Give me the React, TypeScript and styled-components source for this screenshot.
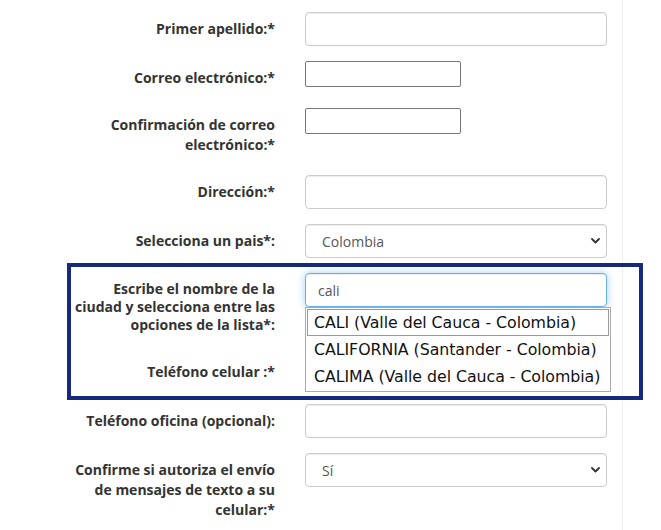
import React from "react";
import styled, { createGlobalStyle } from "styled-components";

const Global = createGlobalStyle`
  html, body { margin: 0; padding: 0; background: #fff; }
  body { font-family: "Open Sans", "Liberation Sans", sans-serif; font-size: 14px; line-height: 1.428571; color: #333; }
  * { box-sizing: border-box; }
`;

const Page = styled.div`
  width: 623px;
  min-height: 530px;
  border-right: 1px solid #eeeeee;
  padding: 12px 0 0 56px;
`;

const Row = styled.div`
  display: grid;
  grid-template-columns: 234px 1fr;
  margin-bottom: 15px;
`;

const Label = styled.label<{ $lh?: number; $mb?: number }>`
  display: block;
  padding: 7px 15px 0 15px;
  margin-bottom: ${(p) => p.$mb ?? 5}px;
  text-align: right;
  font-weight: 700;
  font-size: 14px;
  line-height: ${(p) => p.$lh ?? 20}px;
  color: #333;
`;

const Field = styled.div`
  position: relative;
  padding: 0 15px;
`;

const TextInput = styled.input<{ $focus?: boolean }>`
  display: block;
  width: 100%;
  height: 34px;
  padding: 6px 12px;
  font-family: "Open Sans", "Liberation Sans", sans-serif;
  font-size: 14px;
  color: #555;
  background: #fff;
  border: 1px solid ${(p) => (p.$focus ? "#66afe9" : "#ccc")};
  border-radius: 4px;
  box-shadow: inset 0 1px 1px rgba(0, 0, 0, 0.075)
    ${(p) => (p.$focus ? ", 0 0 8px rgba(102, 175, 233, 0.6)" : "")};
  outline: none;
`;

const PlainInput = styled.input`
  display: block;
  width: 156px;
  height: 26px;
  padding: 1px 2px;
  border: 1px solid #767676;
  border-radius: 2px;
  background: #fff;
  font-size: 13px;
  outline: none;
`;

const SelectWrap = styled.div`
  position: relative;
`;

const Select = styled.select`
  display: block;
  width: 100%;
  height: 34px;
  padding: 6px 30px 6px 16px;
  font-family: "Open Sans", "Liberation Sans", sans-serif;
  font-size: 14px;
  color: #555;
  background: #fff;
  border: 1px solid #ccc;
  border-radius: 4px;
  box-shadow: inset 0 1px 1px rgba(0, 0, 0, 0.075);
  appearance: none;
  -webkit-appearance: none;
  outline: none;
`;

const Chevron = styled.svg`
  position: absolute;
  right: 7px;
  top: 50%;
  margin-top: -3px;
  width: 9px;
  height: 6px;
  pointer-events: none;
`;

const Group = styled.div`
  position: relative;
`;

const Highlight = styled.div`
  position: absolute;
  top: -10px;
  left: 11px;
  width: 576px;
  height: 137px;
  border: 4px solid #17297f;
  pointer-events: none;
  z-index: 3;
`;

const Suggestions = styled.ul`
  position: absolute;
  top: 34px;
  left: 15px;
  width: 306px;
  margin: 0;
  padding: 1px;
  list-style: none;
  background: #fff;
  border: 1px solid #aaa;
  z-index: 2;
`;

const Suggestion = styled.li<{ $active?: boolean }>`
  height: 27px;
  padding: 0 6px;
  line-height: 25px;
  font-family: "DejaVu Sans", Verdana, sans-serif;
  font-size: 15.8px;
  letter-spacing: -0.05px;
  color: #111;
  white-space: nowrap;
  border: 1px solid ${(p) => (p.$active ? "#999" : "transparent")};
`;

const Down = () => (
  <Chevron viewBox="0 0 9 6">
    <path d="M1 1 L4.5 4.5 L8 1" fill="none" stroke="#333" strokeWidth="1.8" strokeLinecap="round" strokeLinejoin="round" />
  </Chevron>
);

export default function App() {
  return (
    <>
      <Global />
      <Page>
        <Row>
          <Label>Primer apellido:*</Label>
          <Field>
            <TextInput type="text" />
          </Field>
        </Row>
        <Row>
          <Label>Correo electrónico:*</Label>
          <Field>
            <PlainInput type="text" />
          </Field>
        </Row>
        <Row>
          <Label>Confirmación de correo electrónico:*</Label>
          <Field>
            <PlainInput type="text" />
          </Field>
        </Row>
        <Row>
          <Label>Dirección:*</Label>
          <Field>
            <TextInput type="text" />
          </Field>
        </Row>
        <Row>
          <Label>Selecciona un pais*:</Label>
          <Field>
            <SelectWrap>
              <Select defaultValue="co">
                <option value="co">Colombia</option>
              </Select>
              <Down />
            </SelectWrap>
          </Field>
        </Row>
        <Group>
          <Highlight />
          <Row>
            <Label $lh={18} $mb={6}>
              Escribe el nombre de la ciudad y selecciona entre las opciones de la lista*:
            </Label>
            <Field>
              <TextInput type="text" $focus defaultValue="cali" />
              <Suggestions>
                <Suggestion $active>CALI (Valle del Cauca - Colombia)</Suggestion>
                <Suggestion>CALIFORNIA (Santander - Colombia)</Suggestion>
                <Suggestion>CALIMA (Valle del Cauca - Colombia)</Suggestion>
              </Suggestions>
            </Field>
          </Row>
          <Row>
            <Label>Teléfono celular :*</Label>
            <Field>
              <TextInput type="text" />
            </Field>
          </Row>
        </Group>
        <Row>
          <Label>Teléfono oficina (opcional):</Label>
          <Field>
            <TextInput type="text" />
          </Field>
        </Row>
        <Row>
          <Label>Confirme si autoriza el envío de mensajes de texto a su celular:*</Label>
          <Field>
            <SelectWrap>
              <Select defaultValue="si">
                <option value="si">Sí</option>
              </Select>
              <Down />
            </SelectWrap>
          </Field>
        </Row>
      </Page>
    </>
  );
}
